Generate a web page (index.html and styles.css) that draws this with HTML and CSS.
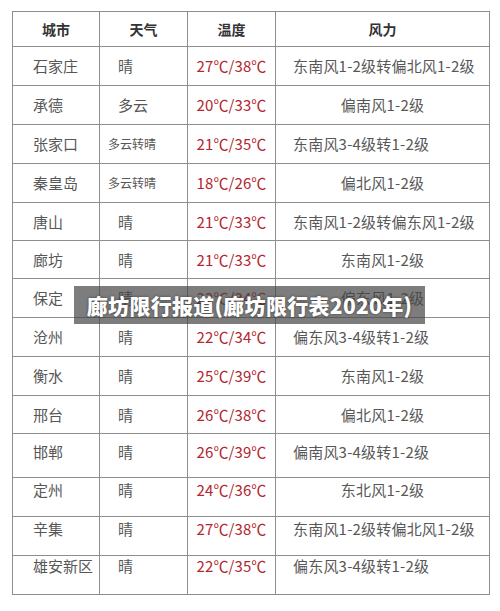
FILE: index.html
```html
<!DOCTYPE html>
<html lang="zh-CN">
<head>
<meta charset="utf-8">
<title>廊坊限行报道</title>
<link rel="stylesheet" href="styles.css">
</head>
<body>
<div class="page">
  <table class="weather">
    <colgroup>
      <col class="c-city"><col class="c-wx"><col class="c-temp"><col class="c-wind">
    </colgroup>
    <thead>
      <tr class="head"><th>城市</th><th>天气</th><th>温度</th><th>风力</th></tr>
    </thead>
    <tbody>
      <tr class="h39"><td class="city">石家庄</td><td class="wx">晴</td><td class="temp">27℃/38℃</td><td class="wind">东南风1-2级转偏北风1-2级</td></tr>
      <tr class="h39"><td class="city">承德</td><td class="wx">多云</td><td class="temp">20℃/33℃</td><td class="wind mid">偏南风1-2级</td></tr>
      <tr class="h39"><td class="city">张家口</td><td class="wx small">多云转晴</td><td class="temp">21℃/35℃</td><td class="wind">东南风3-4级转1-2级</td></tr>
      <tr class="h39"><td class="city">秦皇岛</td><td class="wx small">多云转晴</td><td class="temp">18℃/26℃</td><td class="wind mid">偏北风1-2级</td></tr>
      <tr class="h38"><td class="city">唐山</td><td class="wx">晴</td><td class="temp">21℃/33℃</td><td class="wind">东南风1-2级转偏东风1-2级</td></tr>
      <tr class="h38"><td class="city">廊坊</td><td class="wx">晴</td><td class="temp">21℃/33℃</td><td class="wind mid">东南风1-2级</td></tr>
      <tr class="h39"><td class="city">保定</td><td class="wx">晴</td><td class="temp">22℃/34℃</td><td class="wind mid">偏东风1-2级</td></tr>
      <tr class="h39"><td class="city">沧州</td><td class="wx">晴</td><td class="temp">22℃/34℃</td><td class="wind">偏东风3-4级转1-2级</td></tr>
      <tr class="h39"><td class="city">衡水</td><td class="wx">晴</td><td class="temp">25℃/39℃</td><td class="wind mid">东南风1-2级</td></tr>
      <tr class="h38"><td class="city">邢台</td><td class="wx">晴</td><td class="temp">26℃/38℃</td><td class="wind mid">偏北风1-2级</td></tr>
      <tr class="h44 top18"><td class="city">邯郸</td><td class="wx">晴</td><td class="temp">26℃/39℃</td><td class="wind">偏南风3-4级转1-2级</td></tr>
      <tr class="h39 top12"><td class="city">定州</td><td class="wx">晴</td><td class="temp">24℃/36℃</td><td class="wind mid">东北风1-2级</td></tr>
      <tr class="h39 top12"><td class="city">辛集</td><td class="wx">晴</td><td class="temp">27℃/38℃</td><td class="wind">东南风1-2级转偏北风1-2级</td></tr>
      <tr class="h39 top10"><td class="city">雄安新区</td><td class="wx">晴</td><td class="temp">22℃/35℃</td><td class="wind">偏东风3-4级转1-2级</td></tr>
    </tbody>
  </table>
  <div class="caption">廊坊限行报道(廊坊限行表2020年)</div>
</div>
</body>
</html>
```
FILE: styles.css
```css
html, body {
  margin: 0;
  padding: 0;
  background: #ffffff;
}
.page {
  position: relative;
  width: 500px;
  height: 611px;
  padding: 11px 0 0 12px;
  box-sizing: border-box;
  font-family: "Noto Sans CJK SC", "Noto Sans", sans-serif;
}
.weather {
  border-collapse: collapse;
  table-layout: fixed;
  width: 477px;
  color: #575757;
}
.c-city { width: 87px; }
.c-wx { width: 88px; }
.c-temp { width: 88px; }
.c-wind { width: 214px; }
.weather th,
.weather td {
  border: 1px solid #8e8e8e;
  padding: 0;
  line-height: 16px;
  white-space: nowrap;
  overflow: hidden;
}
.head { height: 35px; }
.weather th {
  font-size: 14px;
  font-weight: 700;
  color: #333333;
  text-align: center;
  vertical-align: middle;
}
.h38 { height: 38px; }
.h39 { height: 39px; }
.h44 { height: 44px; }
.weather td { vertical-align: middle; }
.city {
  font-size: 15px;
  padding-left: 20px !important;
  text-align: left;
}
.wx {
  font-size: 15px;
  padding-left: 18px !important;
  text-align: left;
}
.wx.small {
  font-size: 12px;
  padding-left: 8px !important;
}
.temp {
  font-size: 15px;
  color: #b3262d;
  text-align: center;
  letter-spacing: 0.1px;
}
.wind {
  font-size: 15px;
  letter-spacing: 0.2px;
  text-align: left;
  padding-left: 17px !important;
}
.wind.mid {
  text-align: center;
  padding-left: 0 !important;
}
.top18 td { vertical-align: top; padding-top: 10px; }
.top12 td { vertical-align: top; padding-top: 4px; }
.top10 td { vertical-align: top; padding-top: 2px; }
.caption {
  position: absolute;
  left: 74px;
  top: 286px;
  width: 351px;
  height: 38px;
  background: rgba(70, 70, 70, 0.7);
  color: #ffffff;
  font-size: 21px;
  font-weight: 900;
  letter-spacing: 0.3px;
  line-height: 38px;
  text-align: center;
  text-shadow: 0 0 3px rgba(0, 0, 0, 0.5);
  white-space: nowrap;
}
```
